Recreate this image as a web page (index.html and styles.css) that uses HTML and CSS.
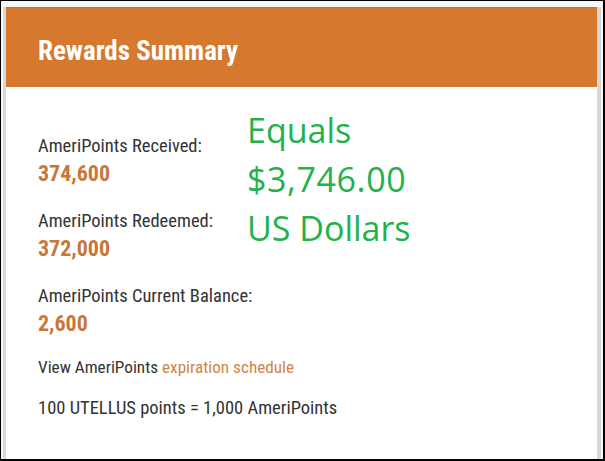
FILE: index.html
```html
<!DOCTYPE html>
<html lang="en">
<head>
    <meta charset="UTF-8">
    <meta name="viewport" content="width=device-width, initial-scale=1.0">
    <title>Rewards Summary</title>
    <link rel="stylesheet" href="styles.css">
</head>
<body>
    <div class="frame">
        <div class="rewards-card">
            <div class="card-header">
                <h1>Rewards Summary</h1>
            </div>

            <div class="card-body">
                <div class="stat">
                    <div class="stat-label">AmeriPoints Received:</div>
                    <div class="stat-value">374,600</div>
                </div>
                <div class="stat">
                    <div class="stat-label">AmeriPoints Redeemed:</div>
                    <div class="stat-value">372,000</div>
                </div>
                <div class="stat">
                    <div class="stat-label">AmeriPoints Current Balance:</div>
                    <div class="stat-value">2,600</div>
                </div>

                <p class="note note-small">View AmeriPoints <a href="#">expiration schedule</a></p>
                <p class="note">100 UTELLUS points = 1,000 AmeriPoints</p>

                <!-- dollar value callout -->
                <div class="callout">Equals<br><span class="amount">$3,746.00</span><br>US Dollars</div>
            </div>
        </div>
    </div>
</body>
</html>
```

FILE: styles.css
```css
* {
    margin: 0;
    padding: 0;
    box-sizing: border-box;
}

html, body {
    height: 100%;
}

body {
    background: #fff;
    font-family: "Roboto Condensed", Roboto, "Liberation Sans", sans-serif;
    color: #333;
}

.frame {
    height: 100%;
    border: 1px solid #000;
    border-width: 1px 2px 2px 1px;
    padding: 6px 2px 0 2px;
    background: #f7f7f7;
}

.rewards-card {
    height: 100%;
    background: white;
    border-left: 3px solid #d9d9d9;
    border-right: 4px solid #d9d9d9;
}

.card-header {
    height: 80px;
    display: flex;
    align-items: center;
    padding: 6px 0 0 32px;
    background: #D6792E;
    border-top: 1px solid #c8722e;
}

.card-header h1 {
    font-size: 27px;
    font-weight: 700;
    color: white;
}

.card-body {
    position: relative;
    padding: 47px 32px 0;
}

.stat {
    margin-bottom: 21px;
}

.stat-label {
    font-size: 18.5px;
    line-height: 24px;
    margin-bottom: 2px;
}

.stat-value {
    font-size: 22px;
    line-height: 28px;
    font-weight: 700;
    color: #C8773B;
}

.note {
    font-size: 18.5px;
    line-height: 24px;
    margin-top: -4px;
    margin-bottom: 21px;
}

.note-small {
    font-size: 17.2px;
}

.note a {
    color: #D0844A;
    text-decoration: none;
}

.callout {
    position: absolute;
    left: 241px;
    top: 19px;
    font-family: "Open Sans", "Noto Sans", sans-serif;
    font-size: 34px;
    line-height: 49px;
    color: #22B14C;
}

.callout .amount {
    letter-spacing: 0.6px;
}
```
